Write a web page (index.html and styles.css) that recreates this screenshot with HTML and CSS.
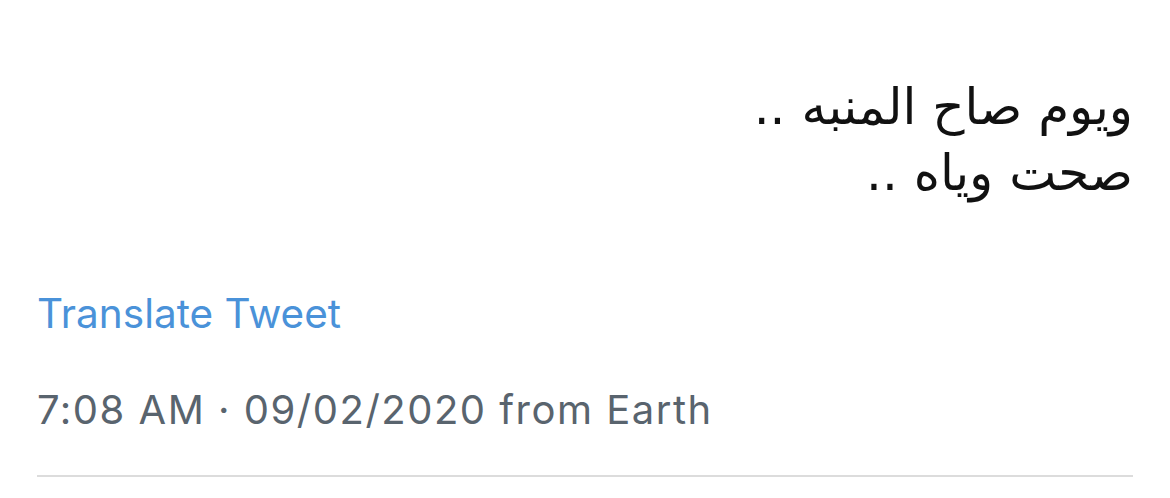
FILE: index.html
```html
<!DOCTYPE html>
<html lang="en">
<head>
<meta charset="utf-8">
<link rel="stylesheet" href="styles.css">
</head>
<body>
<div class="tweet">
  <div class="text" dir="rtl" lang="ar">ويوم صاح المنبه ..<br>صحت وياه ..</div>
  <div class="translate">Translate Tweet</div>
  <div class="meta">7:08 AM · 09/02/2020 from Earth</div>
  <div class="divider"></div>
</div>
</body>
</html>
```
FILE: styles.css
```css
html, body {
  margin: 0;
  padding: 0;
  background: #ffffff;
}
.tweet {
  padding: 74px 37px 0 37px;
  display: flex;
  flex-direction: column;
}
.text {
  font-family: "DejaVu Sans", sans-serif;
  font-size: 50px;
  line-height: 66px;
  color: #111111;
  text-align: right;
}
.translate {
  margin-top: 84px;
  font-family: "Inter", "Liberation Sans", sans-serif;
  font-size: 40.5px;
  line-height: 48px;
  color: #4a92d9;
}
.meta {
  margin-top: 48px;
  font-family: "Inter", "Liberation Sans", sans-serif;
  font-size: 40px;
  letter-spacing: 1.5px;
  line-height: 48px;
  color: #59646e;
}
.divider {
  margin-top: 41px;
  height: 2px;
  background: #dcdcdc;
}
```
